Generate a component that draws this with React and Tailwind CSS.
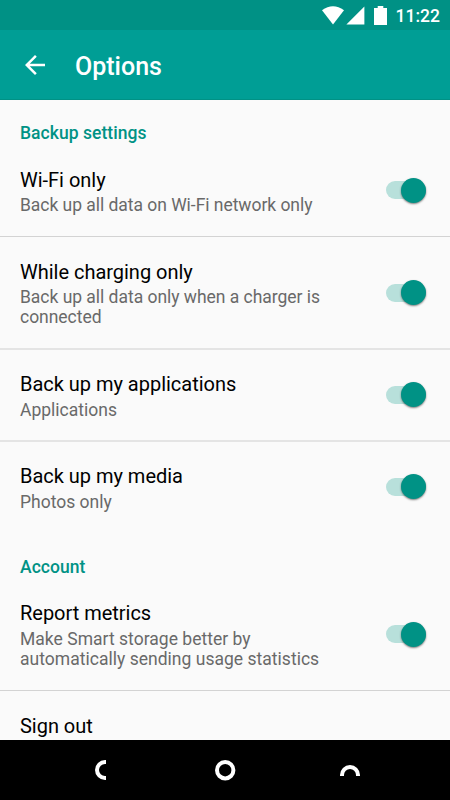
import React, { useState } from 'react';

const sections = [
  {
    title: 'Backup settings',
    items: [
      { id: 'wifi', label: 'Wi-Fi only', detail: 'Back up all data on Wi-Fi network only', row: 'h-[92px] pb-px border-b border-[#d3d3d3]', heading: 'pt-[23px]', text: 'mt-[3px] tracking-[-0.04px]' },
      { id: 'charging', label: 'While charging only', detail: 'Back up all data only when a charger is connected', row: 'h-[113px] border-b-2 border-[#e4e4e4]', heading: 'pt-[23px]', text: 'mt-[3px] tracking-[-0.03px]' },
      { id: 'apps', label: 'Back up my applications', detail: 'Applications', row: 'h-[92px] pb-px border-b-2 border-[#e4e4e4]', heading: 'pt-[22px]', text: 'mt-1' },
      { id: 'media', label: 'Back up my media', detail: 'Photos only', row: 'h-[92px] pb-[3px]', heading: 'pt-[22px]', text: 'mt-1' },
    ],
  },
  {
    title: 'Account',
    items: [
      { id: 'metrics', label: 'Report metrics', detail: 'Make Smart storage better by automatically sending usage statistics', row: 'h-[112px] pb-px border-b border-[#d3d3d3]', heading: 'pt-[22px]', text: 'mt-1 tracking-[0.02px]' },
      { id: 'signout', label: 'Sign out', row: 'h-[92px]', heading: 'pt-[23px]' },
    ],
  },
];

const StatusBar = () => (
  <div className="flex h-[30px] shrink-0 items-center justify-end bg-[#009185] pr-[10px] text-white">
    <svg className="h-[30px] w-[70px]" viewBox="0 0 70 30" fill="currentColor">
      <path d="M2 10.2Q13 2.4 24 10.2L13 24.6Z" />
      <path d="M26.4 24.4L44.4 6.4V24.4Z" />
      <path d="M54 8H57.7V6H63.3V8H67V25H54Z" />
    </svg>
    <span className="ml-[6px] mt-[3px] text-[17.5px] font-medium leading-none">11:22</span>
  </div>
);

const AppBar = () => (
  <header className="flex h-[70px] shrink-0 items-center border-b border-[#009185] bg-[#009e95] pl-5 text-white">
    <button className="h-[30px] w-[30px]" aria-label="Back">
      <svg viewBox="0 0 24 24" fill="currentColor">
        <path d="M20 11H7.83l5.59-5.59L12 4l-8 8 8 8 1.41-1.41L7.83 13H20v-2z" />
      </svg>
    </button>
    <h1 className="ml-[25px] mt-[3px] text-[25px] font-medium leading-none">Options</h1>
  </header>
);

const Toggle = ({ checked, label, onChange }) => (
  <button
    role="switch"
    aria-checked={checked}
    aria-label={label}
    onClick={onChange}
    className={`flex h-[18px] w-[40px] shrink-0 items-center rounded-full ${checked ? 'justify-end bg-[#b8e0db]' : 'justify-start bg-[#b9b9b9]'}`}
  >
    <span className={`h-[25px] w-[25px] shrink-0 rounded-full shadow-[0_1px_2px_rgba(0,0,0,0.5)] ${checked ? 'bg-[#009285]' : 'bg-[#f1f1f1]'}`} />
  </button>
);

const App = () => {
  const [enabled, setEnabled] = useState({ wifi: true, charging: true, apps: true, media: true, metrics: true });

  const handleToggle = (id) => {
    setEnabled({ ...enabled, [id]: !enabled[id] });
  };

  return (
    <div className="flex h-[800px] w-[450px] flex-col overflow-hidden bg-[#fafafa] font-['Roboto',sans-serif]">
      <StatusBar />
      <AppBar />

      <main className="min-h-0 flex-1 overflow-hidden">
        {sections.map((section) => (
          <section key={section.title}>
            <h2 className="h-[45px] px-5 pt-[23px] text-[17.5px] font-medium leading-[21px] tracking-[0.04px] text-[#009285]">
              {section.title}
            </h2>
            {section.items.map((item) => (
              <div key={item.id} className={`flex items-center pl-5 pr-6 ${item.row}`}>
                <div className={`min-w-0 flex-1 self-start pr-[40px] ${item.heading}`}>
                  <div className="text-[20px] leading-6 tracking-[-0.02px] text-black">{item.label}</div>
                  {item.detail && (
                    <div className={`text-[17.5px] leading-5 text-[#696969] ${item.text}`}>{item.detail}</div>
                  )}
                </div>
                {item.detail && (
                  <Toggle checked={enabled[item.id]} label={item.label} onChange={() => handleToggle(item.id)} />
                )}
              </div>
            ))}
          </section>
        ))}
      </main>

      {/* system navigation */}
      <nav className="flex h-[60px] shrink-0 items-center justify-between bg-black px-[85px] text-white">
        <svg className="h-[30px] w-[30px]" viewBox="0 0 30 30" fill="none" stroke="currentColor" strokeWidth="4">
          <path d="M21 7H20A8 8 0 0 0 20 23H21" />
        </svg>
        <svg className="h-[30px] w-[30px]" viewBox="0 0 30 30" fill="none" stroke="currentColor" strokeWidth="4">
          <circle cx="15.2" cy="15.2" r="8.2" />
        </svg>
        <svg className="h-[30px] w-[30px]" viewBox="0 0 30 30" fill="none" stroke="currentColor" strokeWidth="4">
          <path d="M7 21V20A8 8 0 0 1 23 20V21" />
        </svg>
      </nav>
    </div>
  );
};

export default App;
